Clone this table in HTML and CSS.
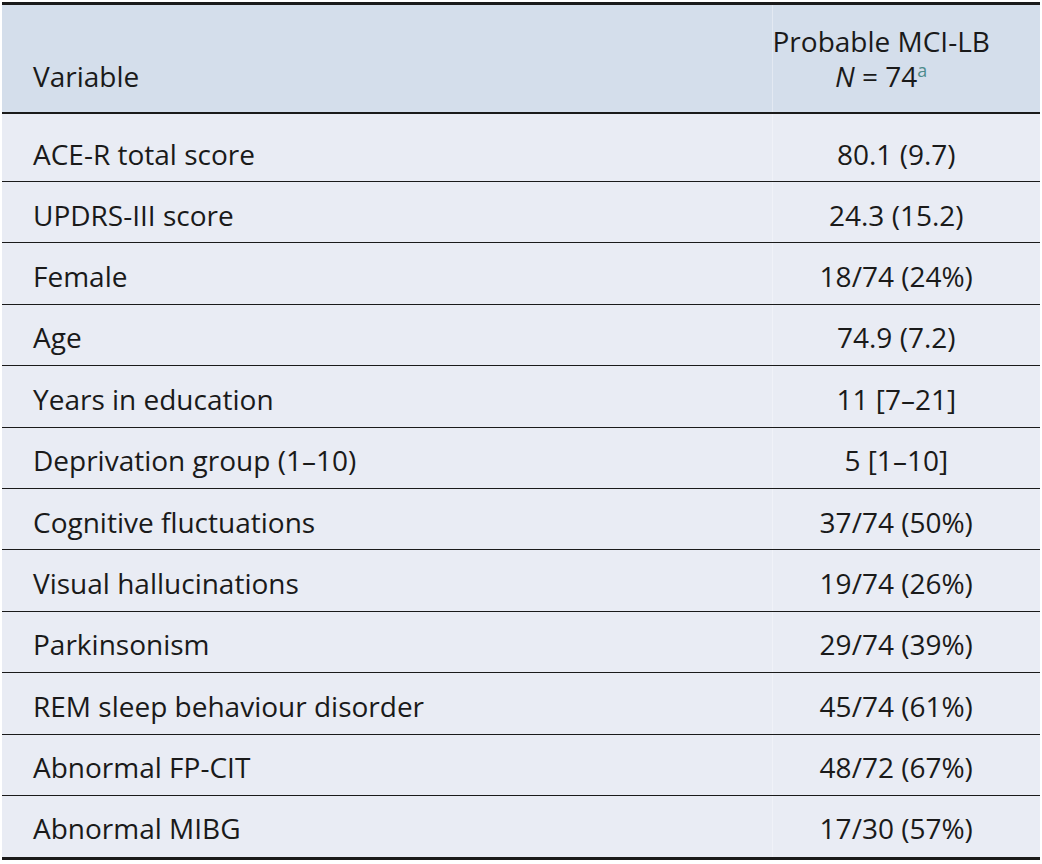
FILE: index.html
```html
<!DOCTYPE html>
<html lang="en">
<head>
<meta charset="utf-8">
<title>Table</title>
<link rel="stylesheet" href="styles.css">
</head>
<body>
<table class="data">
  <colgroup>
    <col class="col-var">
    <col class="col-val">
  </colgroup>
  <thead>
    <tr>
      <th class="var">Variable</th>
      <th class="val"><span class="head-block">Probable MCI-LB<br><i>N</i> = 74<sup>a</sup></span></th>
    </tr>
  </thead>
  <tbody>
    <tr class="first"><td class="var">ACE-R total score</td><td class="val">80.1 (9.7)</td></tr>
    <tr><td class="var">UPDRS-III score</td><td class="val">24.3 (15.2)</td></tr>
    <tr><td class="var">Female</td><td class="val">18/74 (24%)</td></tr>
    <tr><td class="var">Age</td><td class="val">74.9 (7.2)</td></tr>
    <tr><td class="var">Years in education</td><td class="val">11 [7–21]</td></tr>
    <tr><td class="var">Deprivation group (1–10)</td><td class="val">5 [1–10]</td></tr>
    <tr><td class="var">Cognitive fluctuations</td><td class="val">37/74 (50%)</td></tr>
    <tr><td class="var">Visual hallucinations</td><td class="val">19/74 (26%)</td></tr>
    <tr><td class="var">Parkinsonism</td><td class="val">29/74 (39%)</td></tr>
    <tr><td class="var">REM sleep behaviour disorder</td><td class="val">45/74 (61%)</td></tr>
    <tr><td class="var">Abnormal FP-CIT</td><td class="val">48/72 (67%)</td></tr>
    <tr class="last"><td class="var">Abnormal MIBG</td><td class="val">17/30 (57%)</td></tr>
  </tbody>
</table>
</body>
</html>
```
FILE: styles.css
```css
html, body {
  margin: 0;
  padding: 0;
  background: #ffffff;
}
body {
  padding: 2px 2px 0 2px;
  font-family: "Open Sans", "Noto Sans", sans-serif;
  color: #1a1a1a;
}
.data {
  width: 1038px;
  table-layout: fixed;
  border-collapse: collapse;
  font-size: 28px;
  border-top: 3px solid #1a1a1a;
  border-bottom: 3px solid #1a1a1a;
}
.col-var { width: 770px; }
.col-val { width: 268px; }
.data th {
  box-sizing: border-box;
  font-weight: normal;
  background: #d4deeb;
  vertical-align: bottom;
  height: 109px;
  padding: 0 0 18px 0;
  line-height: 35px;
  white-space: nowrap;
  border-bottom: 2px solid #1a1a1a;
}
.data td {
  box-sizing: border-box;
  background: #e9ecf4;
  height: 61.4px;
  padding: 5px 0 0 0;
  border-bottom: 1px solid #1a1a1a;
  line-height: 32px;
  white-space: nowrap;
}
.data tr.last td {
  border-bottom: none;
  height: 63px;
  padding-top: 4px;
}
.data tr.first td {
  height: 69px;
  padding-top: 14px;
}
.data .var {
  text-align: left;
  padding-left: 31px;
}
.data td.val {
  text-align: center;
  padding-right: 20px;
  border-left: 1px solid rgba(255,255,255,0.35);
}
.data th.val {
  text-align: right;
  padding-right: 58px;
  border-left: 1px solid rgba(255,255,255,0.35);
}
.head-block {
  display: inline-block;
  text-align: center;
}
.data sup {
  font-size: 64%;
  color: #4d8b8b;
  vertical-align: top;
  position: relative;
  top: -6px;
}
```
